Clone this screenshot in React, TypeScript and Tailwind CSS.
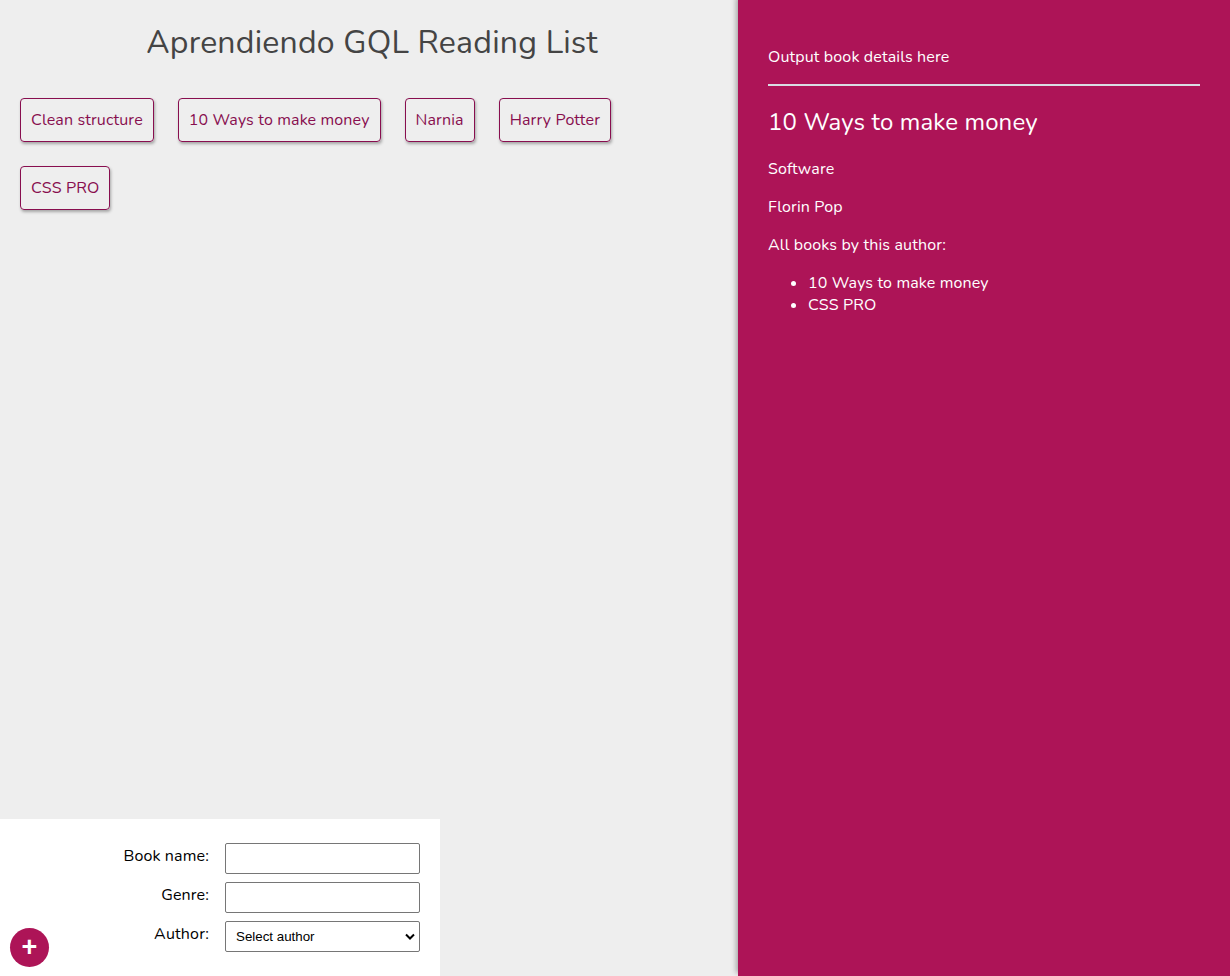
const books = ["Clean structure", "10 Ways to make money", "Narnia", "Harry Potter", "CSS PRO"];

const otherBooks = ["10 Ways to make money", "CSS PRO"];

const App = () => {
  return (
    <div className="flex h-screen bg-[#eee] font-['Nunito','Lato',sans-serif] text-base leading-[normal] tracking-[0.14px]">
      <div id="main" className="w-[60%] flex flex-col">
        <div className="ml-2 w-[728px]">
          <h1 className="mt-[21.44px] text-center text-[32px] tracking-[0.22px] text-[#444]">
            Aprendiendo GQL Reading List
          </h1>
          <ul className="mt-[21.44px] flex flex-wrap">
            {books.map((b) => (
              <li
                key={b}
                className="m-3 cursor-pointer rounded border border-[#880e4f] p-[10px] text-[#880e4f] shadow-[1px_2px_3px_rgba(0,0,0,0.3)]"
              >
                {b}
              </li>
            ))}
          </ul>
        </div>

        <form className="relative mt-auto w-[440px] bg-white p-5">
          <div className="grid grid-cols-2 gap-x-[10px]">
            <label className="p-[6px] text-right text-black">Book name:</label>
            <input type="text" className="my-1 h-[31px] rounded-[2px] border border-[#767676] bg-white px-[6px]" />
          </div>
          <div className="grid grid-cols-2 gap-x-[10px]">
            <label className="p-[6px] text-right text-black">Genre:</label>
            <input type="text" className="my-1 h-[31px] rounded-[2px] border border-[#767676] bg-white px-[6px]" />
          </div>
          <div className="grid grid-cols-2 gap-x-[10px]">
            <label className="p-[6px] text-right text-black">Author:</label>
            <div className="relative my-1 flex h-[31px] items-center rounded-[2px] border border-[#767676] bg-white pl-[10px] font-['Liberation_Sans',Arial,sans-serif] text-[13.33px] tracking-normal text-black">
              Select author
              <svg className="absolute right-[4px] top-[11px]" width="10" height="7" viewBox="0 0 10 7">
                <path d="M1 1.5 L5 5.5 L9 1.5" fill="none" stroke="#000" strokeWidth="2" />
              </svg>
            </div>
          </div>
          <button
            type="button"
            className="absolute bottom-[9px] left-[10px] flex h-[39px] w-[39px] items-center justify-center rounded-full bg-[#ad1457] pb-[1px] font-['Liberation_Sans',Arial,sans-serif] text-[27px] font-bold leading-none tracking-normal text-white"
          >
            +
          </button>
        </form>
      </div>

      <aside className="w-[40%] overflow-auto bg-[#ad1457] p-[30px] text-white shadow-[-2px_-3px_5px_rgba(0,0,0,0.3)]">
        <p className="my-4">Output book details here</p>
        <hr className="border-t-2 border-[#d9dce3]" />
        <div>
          <h2 className="my-[19.92px] text-[24px]">10 Ways to make money</h2>
          <p className="my-4">Software</p>
          <p className="my-4">Florin Pop</p>
          <p className="my-4">All books by this author:</p>
          <ul className="my-4 list-disc pl-10">
            {otherBooks.map((b) => (
              <li key={b}>{b}</li>
            ))}
          </ul>
        </div>
      </aside>
    </div>
  );
};

export default App;
